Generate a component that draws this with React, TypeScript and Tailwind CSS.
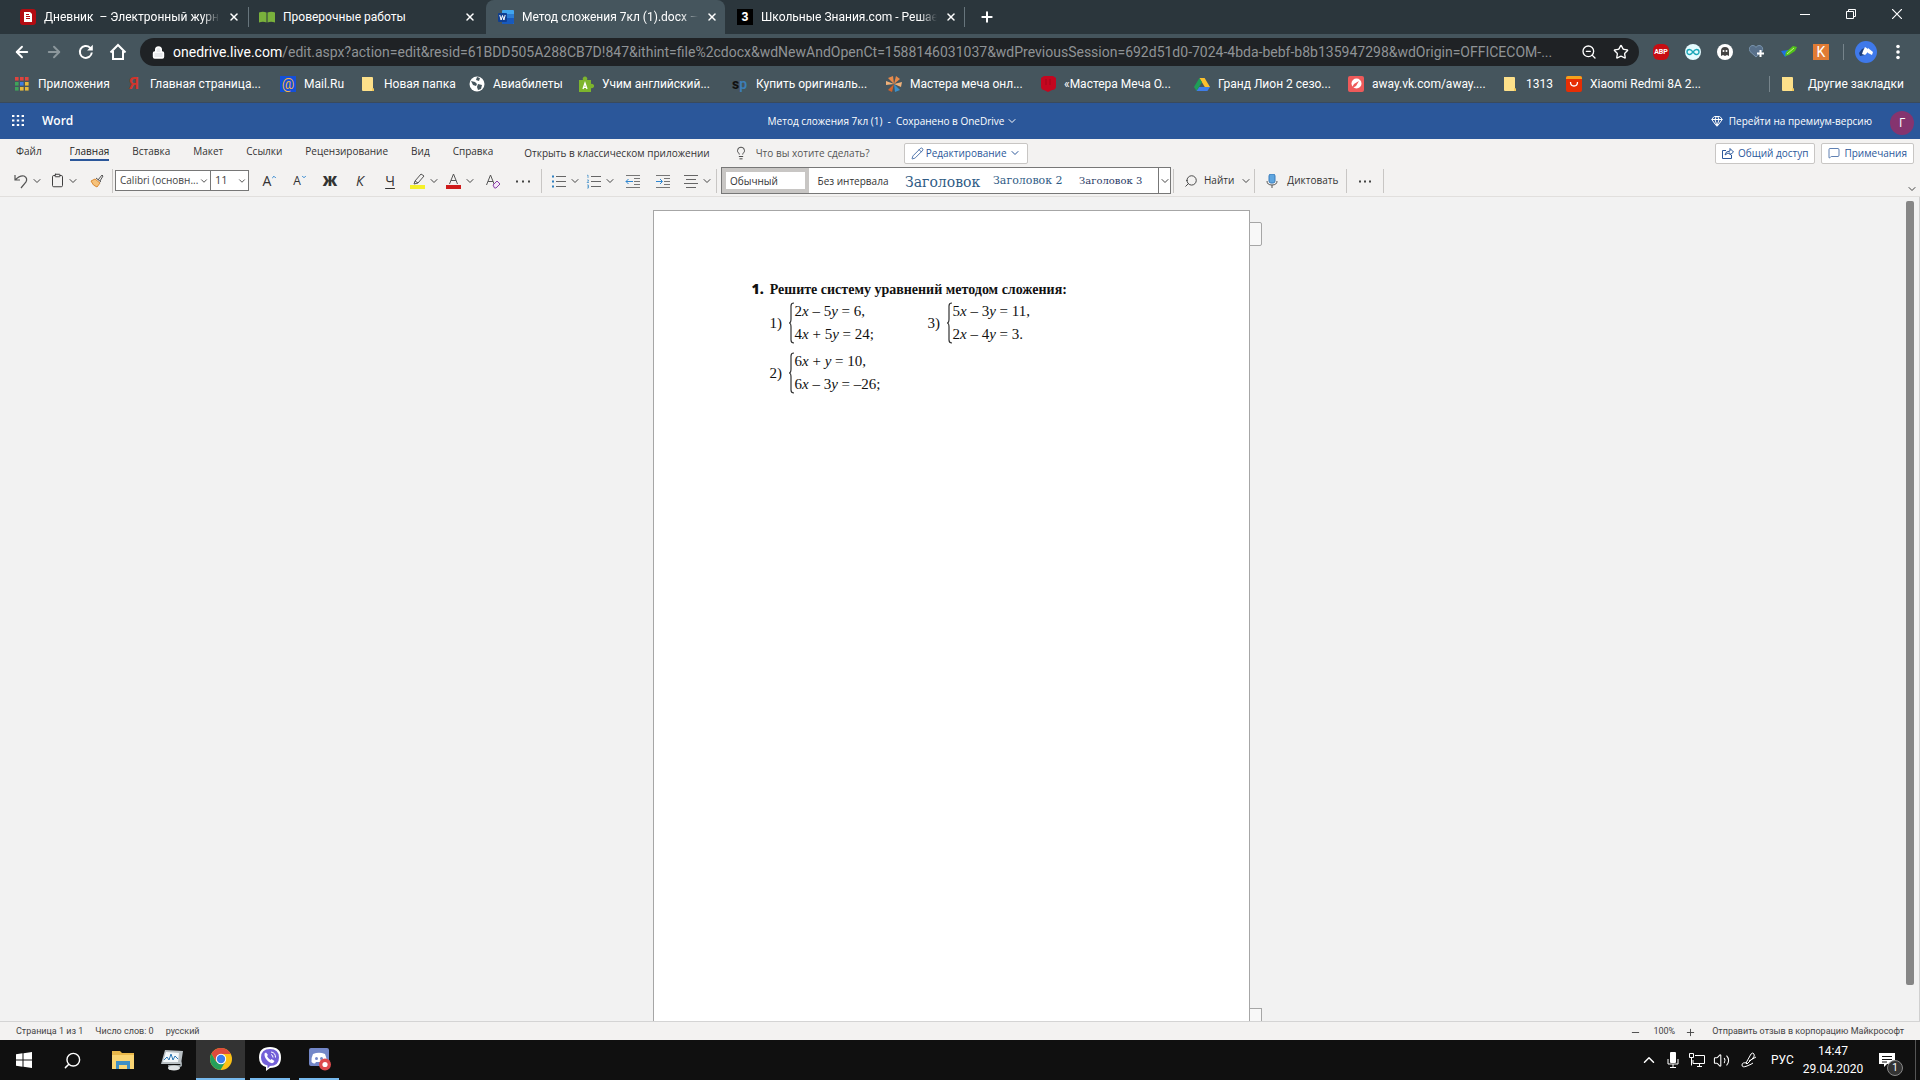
import type { ReactNode } from 'react';
import {
  ArrowLeft,
  ArrowRight,
  ChevronDown,
  ChevronUp,
  Clipboard,
  Gem,
  Lightbulb,
  Lock,
  MessageSquare,
  Minus,
  Pencil,
  Plus,
  Search,
  Star,
  Volume2,
  X,
  ZoomOut,
} from 'lucide-react';

/* ---------- small drawings ---------- */

function Svg({ size = 16, children, box = 16 }: { size?: number; box?: number; children: ReactNode }) {
  return (
    <svg width={size} height={size} viewBox={`0 0 ${box} ${box}`} fill="none" className="shrink-0" aria-hidden="true">
      {children}
    </svg>
  );
}

const DiaryIcon = () => (
  <Svg>
    <rect width="16" height="16" rx="3" fill="#b30c12" />
    <path d="M4 3h6l2 2v8H4z" fill="#fff" />
    <path d="M6 5.500h3M6 7.500h4M6 9.500h4" stroke="#b30c12" />
  </Svg>
);

const BookIcon = () => (
  <Svg>
    <path d="M0 3.500q4-1.500 7.500 0v10q-3.500-1.500-7.500 0zM8.500 3.500q4-1.500 7.500 0v10q-4-1.500-7.500 0z" fill="#79b13c" />
  </Svg>
);

const WordIcon = () => (
  <Svg>
    <rect x="4" y="1" width="12" height="14" rx="1" fill="#41a5ee" />
    <path d="M4 5h12v4H4z" fill="#2b7cd3" />
    <path d="M4 9h12v5a1 1 0 0 1-1 1H4z" fill="#185abd" />
    <rect y="4" width="9" height="9" rx="1" fill="#103f91" />
    <path d="M1.800 6l1.300 5 1.400-4.500L5.900 11l1.300-5" stroke="#fff" />
  </Svg>
);

const ZnanijaIcon = () => (
  <span className="flex h-4 w-4 shrink-0 items-center justify-center bg-black text-xs font-extrabold text-white">3</span>
);

const ReloadIcon = () => (
  <Svg size={18} box={18}>
    <path d="M14.800 9.500A6 6 0 1 1 13 4.600l1.500 1.500" stroke="#fff" strokeWidth="2" />
    <path d="M15.800 1.800v5.700h-5.700z" fill="#fff" />
  </Svg>
);

const HomeIcon = () => (
  <Svg size={18} box={18}>
    <path d="M1.500 9.500L9 2l7.500 7.500M4 8v8h10V8" stroke="#fff" strokeWidth="2" />
  </Svg>
);

const AppsIcon = () => (
  <Svg>
    {['#e0443e', '#e0443e', '#e0443e', '#3fa35a', '#3f7de0', '#e6b93c', '#3fa35a', '#e6b93c', '#e6b93c'].map((c, i) => (
      <rect key={i} x={1 + (i % 3) * 5} y={1 + Math.floor(i / 3) * 5} width="3.600" height="3.600" fill={c} />
    ))}
  </Svg>
);

const FolderIcon = () => (
  <Svg>
    <path d="M2 1h10a1 1 0 0 1 1 1v10l1 1v2H3a1 1 0 0 1-1-1z" fill="#fde08a" />
    <path d="M12 12l2 1v2h-2z" fill="#f3c956" />
  </Svg>
);

const MailRuIcon = () => (
  <span className="flex h-4 w-4 shrink-0 items-center justify-center bg-[#1450d8] text-sm leading-none text-[#f2b04a]">@</span>
);

const GlobeIcon = () => (
  <Svg>
    <circle cx="8" cy="8" r="7.500" fill="#fff" />
    <path d="M2 5l4 1 2 2-1 2-3-1zM8 1l3 1-1 3-3-1zM9 8l4 1-1 4-3 1-1-3z" fill="#45555d" />
  </Svg>
);

const PuzzleIcon = () => (
  <Svg>
    <path d="M1 4h4a2.300 2.300 0 1 1 4 0h4v4a2.200 2.200 0 1 1 0 4v4H1z" fill="#7db52d" />
    <path d="M5 13l2-6 2 6M5.700 11.300h2.600" stroke="#fff" strokeWidth="1.300" />
  </Svg>
);

const WheelIcon = () => (
  <Svg>
    <path d="M8 8L7 0 2 2zM8 8l6-5-4-3z" fill="#e78a4b" />
    <path d="M8 8L0 5v4zM8 8l8-2-1 5z" fill="#f0b27a" />
    <path d="M8 8l-6 6 4 2z" fill="#d2632b" />
    <path d="M8 8l1 8 5-2z" fill="#3a8fc9" />
  </Svg>
);

const ShieldIcon = () => (
  <Svg>
    <path d="M1 2l3-2h9l3 2v8q0 4-4 4l-4 2-4-2q-3 0-3-4z" fill="#c4061f" />
    <path d="M6 3v6M10 3v6" stroke="#a0041a" />
  </Svg>
);

const DriveIcon = () => (
  <Svg>
    <path d="M5.400 2h5.200L16 11h-5.200z" fill="#fbc02d" />
    <path d="M5.400 2L0 11l2.600 4L8 6.200z" fill="#1e9e57" />
    <path d="M5.200 11H16l-2.600 4H2.600z" fill="#3f7de8" />
  </Svg>
);

const VkAwayIcon = () => (
  <Svg>
    <rect width="16" height="16" rx="2" fill="#ee5a5a" />
    <circle cx="8.500" cy="7.500" r="5" fill="#fff" />
    <path d="M3 13l3-5 5-3-3 5z" fill="#ee5a5a" />
  </Svg>
);

const AliIcon = () => (
  <Svg>
    <rect width="16" height="16" rx="2" fill="#e62e04" />
    <path d="M0 3V2a2 2 0 0 1 2-2h12a2 2 0 0 1 2 2v1z" fill="#f7a11b" />
    <path d="M4.500 6q0 4 3.500 4t3.500-4" stroke="#fff" strokeWidth="1.300" />
  </Svg>
);

const Caret = ({ className = 'text-[#444]' }: { className?: string }) => (
  <ChevronDown size={12} strokeWidth={2} className={`shrink-0 ${className}`} />
);

function Lines({ kind }: { kind: 'bullets' | 'numbers' | 'outdent' | 'indent' | 'align' }) {
  if (kind === 'align') {
    return (
      <Svg>
        <path d="M1 2.500h14M3 6.500h10M1 10.500h14M3 14.500h10" stroke="#666" />
      </Svg>
    );
  }
  if (kind === 'outdent' || kind === 'indent') {
    return (
      <Svg>
        <path d="M1 2.500h14M9 5.500h6M9 8.500h6M9 11.500h6M1 14.500h14" stroke="#777" />
        <path d={kind === 'outdent' ? 'M8 8.500H1M3.500 6L1 8.500 3.500 11' : 'M1 8.500h6M5 6l2.500 2.500L5 11'} stroke="#2f86d0" />
      </Svg>
    );
  }
  return (
    <Svg>
      <path d="M5 3.500h10M5 8.500h10M5 13.500h10" stroke="#666" />
      {kind === 'bullets' ? (
        <path d="M1 2.500h2v2H1zM1 7.500h2v2H1zM1 12.500h2v2H1z" fill="#2f7fc0" />
      ) : (
        <path d="M1 2.500l1-.5v3M1 7h1.500v1L1 9.500h2M1 12h1.500v3H1M1.500 13.500h1" stroke="#4a94cc" strokeWidth=".8" />
      )}
    </Svg>
  );
}

/* ---------- browser ---------- */

const tabs = [
  { title: 'Дневник  – Электронный журна', icon: <DiaryIcon />, fade: true },
  { title: 'Проверочные работы', icon: <BookIcon /> },
  { title: 'Метод сложения 7кл (1).docx —', icon: <WordIcon />, active: true, fade: true },
  { title: 'Школьные Знания.com - Решае', icon: <ZnanijaIcon />, fade: true },
];

function TabStrip() {
  return (
    <div className="flex h-[34px] items-stretch bg-[#2b363c] pl-2 text-white">
      {tabs.map((t, i) => (
        <div key={t.title} className={`flex w-[239px] items-center gap-2 pl-3 pr-2 ${t.active ? 'rounded-t-lg bg-[#45555d]' : ''}`}>
          {t.icon}
          <a
            href="#"
            className={`w-44 whitespace-pre text-xs ${
              t.fade ? '[mask-image:linear-gradient(to_right,black_90%,transparent)]' : ''
            }`}
          >
            {t.title}
          </a>
          <button aria-label="Закрыть вкладку" className="flex w-4 justify-center">
            <X size={12} strokeWidth={3} />
          </button>
          {i === 0 && <span className="-mr-2 h-5 w-px shrink-0 bg-[#67757c]" />}
        </div>
      ))}
      <span className="my-auto h-5 w-px bg-[#67757c]" />
      <button aria-label="Новая вкладка" className="px-3.5">
        <Plus size={16} strokeWidth={3} />
      </button>
      <div className="ml-auto flex h-7 items-center">
        <button aria-label="Свернуть" className="flex w-[46px] justify-center">
          <Svg size={10} box={10}>
            <path d="M0 5.500h10" stroke="#fff" />
          </Svg>
        </button>
        <button aria-label="Свернуть в окно" className="flex w-[46px] justify-center">
          <Svg size={10} box={10}>
            <path d="M.5 2.500h7v7h-7zM2.500 2.500v-2h7v7h-2" stroke="#fff" />
          </Svg>
        </button>
        <button aria-label="Закрыть" className="flex w-[46px] justify-center">
          <Svg size={10} box={10}>
            <path d="M0 0l10 10M10 0L0 10" stroke="#fff" strokeWidth="1.200" />
          </Svg>
        </button>
      </div>
    </div>
  );
}

const extensions = [
  {
    name: 'Adblock Plus',
    icon: (
      <span className="flex h-4 w-4 items-center justify-center rounded-md bg-[#c70d12] text-[7px] font-bold text-white">ABP</span>
    ),
  },
  {
    name: 'Синхронизация',
    icon: (
      <Svg>
        <circle cx="8" cy="8" r="8" fill="#e4fbff" />
        <path d="M8 8q-2-2.500-3.500-2.500a2.500 2.500 0 0 0 0 5Q6 10.500 8 8t3.500-2.500a2.500 2.500 0 0 1 0 5Q10 10.500 8 8z" stroke="#1aa7b8" strokeWidth="1.400" />
      </Svg>
    ),
  },
  {
    name: 'Призрак',
    icon: (
      <Svg>
        <circle cx="8" cy="8" r="8" fill="#fff" />
        <path d="M4 12V7a4 4 0 0 1 8 0v5l-2-1-2 1-2-1z" fill="#444" />
        <circle cx="6.500" cy="7" r="1" fill="#fff" />
        <circle cx="9.500" cy="7" r="1" fill="#fff" />
      </Svg>
    ),
  },
  {
    name: 'Избранное',
    icon: (
      <Svg>
        <path d="M7 13L1 7.500Q-1 3 3 1.500q3-.5 4 2 1-2.500 4-2 4 1.500 2 6z" fill="#58708a" stroke="#7893ad" />
        <path d="M11.500 6v7M8 9.500h7" stroke="#fff" strokeWidth="2" />
      </Svg>
    ),
  },
  {
    name: 'Маркер',
    icon: (
      <Svg>
        <path d="M0 7l4 6 4-3-1-4z" fill="#1f6fe0" />
        <path d="M4 12l1-4 7-6 4 1-2 4-6 4z" fill="#52c41a" />
        <path d="M6 10l7-6" stroke="#c8f08a" />
      </Svg>
    ),
  },
  {
    name: 'K',
    icon: <span className="flex h-4 w-4 items-center justify-center bg-[#e07b34] text-sm leading-none text-white">K</span>,
  },
];

function Toolbar() {
  return (
    <div className="flex h-9 items-center bg-[#45555d] pl-1.5 pr-1.5 text-white">
      <button aria-label="Назад" className="flex w-8 justify-center"><ArrowLeft size={18} strokeWidth={2.5} /></button>
      <button aria-label="Вперёд" className="flex w-8 justify-center text-[#8c979c]"><ArrowRight size={18} strokeWidth={2.5} /></button>
      <button aria-label="Обновить" className="flex w-8 justify-center"><ReloadIcon /></button>
      <button aria-label="Домой" className="flex w-8 justify-center"><HomeIcon /></button>
      <div className="ml-1.5 mr-1.5 flex h-7 flex-1 items-center rounded-full bg-[#1f2225] pl-3 pr-2.5 text-sm">
        <Lock size={13} strokeWidth={3} fill="#e8eaed" className="shrink-0" />
        <label htmlFor="address" className="ml-2">onedrive.live.com</label>
        <input
          id="address"
          readOnly
          className="min-w-0 flex-1 bg-transparent text-[#8f9396] outline-none"
          value="/edit.aspx?action=edit&resid=61BDD505A288CB7D!847&ithint=file%2cdocx&wdNewAndOpenCt=1588146031037&wdPreviousSession=692d51d0-7024-4bda-bebf-b8b135947298&wdOrigin=OFFICECOM-..."
        />
        <button aria-label="Масштаб" className="mr-4"><ZoomOut size={16} /></button>
        <button aria-label="В закладки"><Star size={16} /></button>
      </div>
      {extensions.map((e) => (
        <button key={e.name} aria-label={e.name} className="flex w-8 justify-center">
          {e.icon}
        </button>
      ))}
      <span className="mx-1.5 h-4 w-px bg-[#76848b]" />
      <button aria-label="Профиль" className="flex w-8 justify-center">
        <Svg size={22} box={22}>
          <circle cx="11" cy="11" r="11" fill="#3f79ea" />
          <path d="M4 12l3-4 3-1v7l-5 1z" fill="#1d3f7d" />
          <path d="M10 6l3 2v3l-3 3-3-1 1-3zM13 7l5 4-1 3-4-2z" fill="#fff" />
        </Svg>
      </button>
      <button aria-label="Меню" className="flex w-8 justify-center">
        <Svg>
          <circle cx="8" cy="2.500" r="1.800" fill="#fff" />
          <circle cx="8" cy="8" r="1.800" fill="#fff" />
          <circle cx="8" cy="13.500" r="1.800" fill="#fff" />
        </Svg>
      </button>
    </div>
  );
}

const bookmarks = [
  { title: 'Приложения', icon: <AppsIcon />, width: 'w-28' },
  {
    title: 'Главная страница...',
    icon: <span className="w-4 shrink-0 text-center text-base font-bold leading-none text-[#d0352c]">Я</span>,
    width: 'w-[154px]',
  },
  { title: 'Mail.Ru', icon: <MailRuIcon />, width: 'w-20' },
  { title: 'Новая папка', icon: <FolderIcon />, width: 'w-[109px]' },
  { title: 'Авиабилеты', icon: <GlobeIcon />, width: 'w-[109px]' },
  { title: 'Учим английский...', icon: <PuzzleIcon />, width: 'w-[154px]' },
  {
    title: 'Купить оригиналь...',
    icon: (
      <span className="w-4 shrink-0 text-sm font-extrabold leading-none text-[#111]">
        s<span className="font-semibold text-[#3c7fb8]">p</span>
      </span>
    ),
    width: 'w-[154px]',
  },
  { title: 'Мастера меча онл...', icon: <WheelIcon />, width: 'w-[154px]' },
  { title: '«Мастера Меча О...', icon: <ShieldIcon />, width: 'w-[154px]' },
  { title: 'Гранд Лион 2 сезо...', icon: <DriveIcon />, width: 'w-[154px]' },
  { title: 'away.vk.com/away....', icon: <VkAwayIcon />, width: 'w-[154px]' },
  { title: '1313', icon: <FolderIcon />, width: 'w-16' },
  { title: 'Xiaomi Redmi 8A 2...', icon: <AliIcon />, width: 'w-[154px]' },
];

function BookmarkBar() {
  return (
    <nav className="flex h-[33px] items-center border-b border-[#3a4a5c] bg-[#45555d] pb-1 pl-3.5 pr-4 text-xs text-white">
      {bookmarks.map((b) => (
        <a key={b.title} href="#" className={`flex shrink-0 items-center gap-2 whitespace-nowrap ${b.width}`}>
          {b.icon}
          {b.title}
        </a>
      ))}
      <a href="#" className="ml-auto flex items-center gap-3 whitespace-nowrap border-l border-[#76848b] pl-2.5">
        <FolderIcon />
        Другие закладки
      </a>
    </nav>
  );
}

/* ---------- word ---------- */

function WordHeader() {
  return (
    <header className="grid h-9 grid-cols-3 items-center bg-[#2b579a] pl-3 pr-1.5 text-white">
      <div className="flex items-center gap-4.5">
        <button aria-label="Приложения">
          <Svg size={12} box={12}>
            {[0, 1, 2].map((r) => (
              <path key={r} d={`M0 ${1 + r * 4.5}h2.400M4.800 ${1 + r * 4.5}h2.400M9.600 ${1 + r * 4.5}h2.400`} stroke="#fff" strokeWidth="2" />
            ))}
          </Svg>
        </button>
        <span className="text-xs font-semibold">Word</span>
      </div>
      <button className="mr-35 flex items-center justify-center gap-0.5 whitespace-pre">
        Метод сложения 7кл (1)  -  Сохранено в OneDrive
        <Caret className="text-white" />
      </button>
      <div className="flex items-center justify-end">
        <button className="flex items-center gap-1.5">
          <Gem size={12} />
          Перейти на премиум-версию
        </button>
        <button className="ml-4.5 mt-1 h-6 w-6 rounded-full bg-[#85346f] text-xs">Г</button>
      </div>
    </header>
  );
}

const ribbonTabs = ['Файл', 'Главная', 'Вставка', 'Макет', 'Ссылки', 'Рецензирование', 'Вид', 'Справка'];

function RibbonTabs() {
  return (
    <div className="flex h-7 items-center pl-4 pr-1.5 text-[#333]">
      {ribbonTabs.map((t, i) => (
        <button
          key={t}
          className={`${i === 0 ? 'mr-7' : 'mr-[23px]'} mb-0.5 border-b-2 leading-4 ${
            i === 1 ? 'border-[#2b579a] text-[#222]' : 'border-transparent'
          }`}
        >
          {t}
        </button>
      ))}
      <button className="ml-2 mr-6">Открыть в классическом приложении</button>
      <Lightbulb size={14} strokeWidth={1.5} />
      <input
        aria-label="Что вы хотите сделать?"
        placeholder="Что вы хотите сделать?"
        className="ml-2 w-[148px] bg-transparent outline-none placeholder:text-[#555]"
      />
      <button className="flex h-[21px] items-center gap-0.5 rounded-xs border border-[#c8c6c4] bg-white px-1.5 text-[#2b579a]">
        <Pencil size={13} strokeWidth={1.5} />
        Редактирование
        <Caret className="text-[#2b579a]" />
      </button>
      <button className="ml-auto flex h-[21px] items-center gap-1 rounded-xs border border-[#c8c6c4] bg-white px-1.5 text-[#2b579a]">
        <Svg size={12} box={12}>
          <path d="M4 3.500H.5v8h9V8M3 8q.5-4 5-4V1.500L11.500 5 8 8V6Q5 6 3 8z" stroke="#2b579a" />
        </Svg>
        Общий доступ
      </button>
      <button className="ml-1.5 flex h-[21px] items-center gap-1 rounded-xs border border-[#c8c6c4] bg-white px-1.5 text-[#2b579a]">
        <MessageSquare size={12} strokeWidth={1.5} />
        Примечания
      </button>
    </div>
  );
}

const Divider = () => <span className="h-6 w-px shrink-0 bg-[#c8c6c4]" />;

function Tool({ label, className, children }: { label: string; className: string; children: ReactNode }) {
  return (
    <button aria-label={label} className={`flex shrink-0 items-center justify-center gap-0.5 ${className}`}>
      {children}
    </button>
  );
}

function RibbonTools() {
  return (
    <div className="flex h-[30px] items-center border-b border-[#e1dfdd] pb-0.5 pl-2.5 text-[#333]">
      <Tool label="Отменить" className="w-9">
        <Svg>
          <path d="M2 2v5h5M2 7q5-5 9-4 4 2 2 6l-5 6" stroke="#555" strokeWidth="1.200" />
        </Svg>
        <Caret />
      </Tool>
      <Tool label="Вставить" className="w-9"><Clipboard size={15} strokeWidth={1.5} /><Caret /></Tool>
      <Tool label="Формат по образцу" className="w-[30px]">
        <Svg size={14} box={14}>
          <path d="M1 7l4-2 5 4-3 4q-4-1-6-6z" fill="#f6c27a" stroke="#d98a35" />
          <path d="M6 4l5 4M8 6l4-5 1 1-3 5" stroke="#555" />
        </Svg>
      </Tool>
      <Divider />
      <div className="ml-0.5 flex items-center">
        <div className="grid w-24 items-center">
          <select aria-label="Шрифт" className="col-start-1 row-start-1 h-[21px] w-full appearance-none border border-[#777] bg-white pl-1 text-[#444]">
            <option>Calibri (основн...</option>
          </select>
          <ChevronDown size={10} className="pointer-events-none col-start-1 row-start-1 mr-0.5 justify-self-end" />
        </div>
        <div className="-ml-px grid w-[39px] items-center">
          <select aria-label="Размер шрифта" className="col-start-1 row-start-1 h-[21px] w-full appearance-none border border-[#777] bg-white pl-1 text-[11px] text-[#444]">
            <option>11</option>
          </select>
          <ChevronDown size={10} className="pointer-events-none col-start-1 row-start-1 mr-0.5 justify-self-end" />
        </div>
      </div>
      <Tool label="Увеличить шрифт" className="ml-1.5 w-[30px] text-sm">
        A<ChevronUp size={6} strokeWidth={4} className="-ml-0.5 mb-2 text-[#2f86d0]" />
      </Tool>
      <Tool label="Уменьшить шрифт" className="w-[30px] text-xs">
        A<ChevronDown size={6} strokeWidth={4} className="-ml-0.5 mb-2 text-[#2f86d0]" />
      </Tool>
      <Tool label="Полужирный" className="w-[30px] text-sm font-extrabold">Ж</Tool>
      <Tool label="Курсив" className="w-[30px] text-sm italic">К</Tool>
      <Tool label="Подчёркнутый" className="w-[30px] text-sm underline underline-offset-2">Ч</Tool>
      <Tool label="Цвет выделения" className="ml-0.5 w-9">
        <Svg>
          <path d="M0 12h15v4H0z" fill="#f5f02a" />
          <path d="M4 11l1-3 6-7 3 2-6 7zM5 8l3 2" stroke="#555" />
        </Svg>
        <Caret />
      </Tool>
      <Tool label="Цвет текста" className="w-9">
        <Svg>
          <path d="M0 12h15v4H0z" fill="#cf1b1b" />
          <path d="M3.500 11l4-10 4 10M5 7.500h5" stroke="#555" />
        </Svg>
        <Caret />
      </Tool>
      <Tool label="Очистить формат" className="w-7">
        <Svg>
          <path d="M1.500 12l4-10 4 10M3 8.500h5" stroke="#555" />
          <path d="M8 12l4-4 3 3-4 4H9.500z" fill="#f3e6f7" stroke="#8a3fa8" />
        </Svg>
      </Tool>
      <Tool label="Ещё" className="mr-0.5 w-8">
        <Svg><path d="M1 8.500h2M7 8.500h2M13 8.500h2" stroke="#444" strokeWidth="2" /></Svg>
      </Tool>
      <Divider />
      <Tool label="Маркеры" className="ml-1.5 w-9"><Lines kind="bullets" /><Caret /></Tool>
      <Tool label="Нумерация" className="w-[34px]"><Lines kind="numbers" /><Caret /></Tool>
      <Tool label="Уменьшить отступ" className="w-[30px]"><Lines kind="outdent" /></Tool>
      <Tool label="Увеличить отступ" className="w-[30px]"><Lines kind="indent" /></Tool>
      <Tool label="Выравнивание" className="ml-0.5 w-9"><Lines kind="align" /><Caret /></Tool>
      <Divider />
      <div className="ml-1 flex h-[27px] w-[450px] shrink-0 items-stretch border border-[#777] bg-white">
        <button className="w-[87px] border-4 border-[#c8c6c4] pl-1 pt-0.5 text-left">Обычный</button>
        <button className="w-[88px] pt-0.5 text-center">Без интервала</button>
        <button className="ml-2 w-[76px] whitespace-nowrap pt-0.5 text-left font-['DejaVu_Serif',serif] text-sm text-[#2f5b85]">Заголовок</button>
        <button className="ml-3 w-[74px] whitespace-nowrap pt-0.5 text-left font-['DejaVu_Serif',serif] text-[11px] text-[#2f5b85]">Заголовок 2</button>
        <button className="ml-3 w-[74px] whitespace-nowrap text-left font-['DejaVu_Serif',serif] text-[10px] text-[#1f3763]">Заголовок 3</button>
        <button aria-label="Все стили" className="ml-auto flex w-3 items-center justify-center border-l border-[#777]"><Caret /></button>
      </div>
      <span className="w-0.5" />
      <Divider />
      <button className="flex shrink-0 items-center gap-1.5 pl-2.5 pr-0.5">
        <Search size={14} strokeWidth={1.5} className="-scale-x-100" />
        <span>Найти</span>
        <Caret />
      </button>
      <Divider />
      <button className="flex shrink-0 items-center gap-2 pl-2.5 pr-2">
        <Svg size={14} box={14}>
          <rect x="4" width="6" height="9" rx="2" fill="#5fa6e0" stroke="#3a7dbb" />
          <path d="M2 7q0 4 5 4t5-4M7 11v3" stroke="#555" />
        </Svg>
        Диктовать
      </button>
      <Divider />
      <Tool label="Другие команды" className="w-9">
        <Svg><path d="M2 8.500h2M7 8.500h2M12 8.500h2" stroke="#444" strokeWidth="2" /></Svg>
      </Tool>
      <Divider />
      <button aria-label="Свернуть ленту" className="ml-auto mr-0.5 mt-4"><Caret /></button>
    </div>
  );
}

function Equations({ n, lines }: { n: number; lines: string[] }) {
  return (
    <div className="flex items-center">
      <span className="w-[18px]">{n})</span>
      <svg width="6" height="42" viewBox="0 0 6 42" fill="none" aria-hidden="true">
        <path d="M6 1Q3 1 3 4v13q0 4-2 4 2 0 2 4v13q0 3 3 3" stroke="#333" strokeWidth="1.200" />
      </svg>
      <div className="pl-px leading-[23px]">
        {lines.map((line) => (
          <p key={line} className="whitespace-nowrap">
            {line.split(/([xy])/).map((part, i) => (i % 2 ? <i key={i}>{part}</i> : part))}
          </p>
        ))}
      </div>
    </div>
  );
}

function Document() {
  return (
    <main className="flex min-h-0 flex-1 overflow-hidden bg-[#f2f2f2]">
      <div className="flex flex-1 justify-center pt-[13px]">
        <article className="relative w-[597px] border border-b-0 border-[#a6a6a6] bg-white pl-[98px] pt-[68px] font-['Liberation_Serif',serif] text-[15px] text-[#111]">
          <h1 className="text-sm font-bold leading-5">
            <span className="mr-1.5 font-['Open_Sans',sans-serif] font-extrabold">1.</span>
            Решите систему уравнений методом сложения:
          </h1>
          <div className="grid w-80 grid-cols-[158px_1fr] gap-y-1 pl-[18px]">
            <Equations n={1} lines={['2x – 5y = 6,', '4x + 5y = 24;']} />
            <Equations n={3} lines={['5x – 3y = 11,', '2x – 4y = 3.']} />
            <Equations n={2} lines={['6x + y = 10,', '6x – 3y = –26;']} />
          </div>
          <span className="absolute -right-[13px] top-[11px] h-6 w-[13px] rounded-r-xs border border-[#a6a6a6] bg-[#f8f8f8]" />
          <span className="absolute -right-[13px] bottom-0 h-[13px] w-[13px] border border-b-0 border-[#a6a6a6] bg-[#f8f8f8]" />
        </article>
      </div>
      <div className="w-[18px] border-r border-[#d0d0d0] pb-9 pl-1 pt-1">
        <div className="h-full w-2 rounded-xs bg-[#868686]" />
      </div>
    </main>
  );
}

function StatusBar() {
  return (
    <footer className="flex h-[19px] items-center border-t border-[#d4d4d4] bg-[#f3f2f1] px-4 pt-0.5 text-[9px] text-[#444]">
      <span className="mr-3">Страница 1 из 1</span>
      <span className="mr-3">Число слов: 0</span>
      <span>русский</span>
      <button aria-label="Уменьшить" className="ml-auto mr-3"><Minus size={11} /></button>
      <span>100%</span>
      <button aria-label="Увеличить" className="ml-2.5 mr-4"><Plus size={11} /></button>
      <a href="#">Отправить отзыв в корпорацию Майкрософт</a>
    </footer>
  );
}

/* ---------- windows taskbar ---------- */

const pinned = [
  {
    name: 'Проводник',
    icon: (
      <Svg size={22} box={22}>
        <path d="M0 2h8l2 2h12v16H0z" fill="#e9b84a" />
        <path d="M0 6h22v14H0z" fill="#fad573" />
        <path d="M4 12h14v8h-3v-4H7v4H4z" fill="#3f8fc4" />
      </Svg>
    ),
  },
  {
    name: 'Монитор ресурсов',
    icon: (
      <Svg size={24} box={24}>
        <path d="M5 2l18 1-2 13H1z" fill="#b9c0c4" />
        <path d="M6 4l13 1-1 9H3z" fill="#f4f8fa" />
        <path d="M4 12l3-3 2 3 2-6 2 6 2-4 3 3" stroke="#2d78b5" />
        <path d="M8 17h12l2-4v5l-6 4H9z" fill="#9aa2a6" />
        <ellipse cx="14" cy="20" rx="6" ry="2.500" fill="#dfe3e5" />
      </Svg>
    ),
  },
  {
    name: 'Chrome',
    state: 'current',
    icon: (
      <Svg size={22} box={22}>
        <circle cx="11" cy="11" r="11" fill="#fbc116" />
        <path d="M1.500 5.500A11 11 0 0 0 10.500 22L15.500 13.500 6.200 13.700z" fill="#25a05a" />
        <path d="M1.500 5.500L6.500 14 11 6h9.800l-.3-.5A11 11 0 0 0 1.500 5.500z" fill="#de4b3c" />
        <circle cx="11" cy="11" r="5.200" fill="#fff" />
        <circle cx="11" cy="11" r="4.200" fill="#3b7ded" />
      </Svg>
    ),
  },
  {
    name: 'Viber',
    state: 'open',
    icon: (
      <Svg size={24} box={24}>
        <path d="M12 0q11 0 11 10.500T12 21l-4 3v-4Q1 18 1 10.500 1 0 12 0z" fill="#fff" />
        <path d="M12 2q9 0 9 8.500T12 19l-2.500 2.500V18.500Q3 17 3 10.500 3 2 12 2z" fill="#7360d8" />
        <path d="M8 5.500l-1.500 1Q6 11 11 15q3 2 4.500.5l1-1.500-3-2-1 1Q10 11.500 9 9l1-1z" fill="#fff" />
        <path d="M13 5q4.500.5 4.500 5.500M13 7.500q2 .5 2 3" stroke="#fff" />
      </Svg>
    ),
  },
  {
    name: 'Discord',
    state: 'open',
    icon: (
      <Svg size={24} box={24}>
        <path d="M2 3a2 2 0 0 1 2-2h16a2 2 0 0 1 2 2v19l-4-3H4a2 2 0 0 1-2-2z" fill="#7387c8" />
        <path d="M6 7q6-2.500 12 0 2 4 1.500 8-2 1.500-3.500 1.500l-1-1.500H9l-1 1.500q-2 0-3.500-1.500Q4 11 6 7z" fill="#fff" />
        <circle cx="9.500" cy="11.500" r="1.500" fill="#7387c8" />
        <circle cx="14.500" cy="11.500" r="1.500" fill="#7387c8" />
        <circle cx="18" cy="17.500" r="6" fill="#dd4a4c" />
        <circle cx="18" cy="17.500" r="2.600" fill="#fff" />
      </Svg>
    ),
  },
];

function Taskbar() {
  return (
    <div className="flex h-10 items-stretch bg-[#101010] text-xs text-white">
      <button aria-label="Пуск" className="flex w-12 items-center justify-center">
        <Svg>
          <path d="M0 2.200L6.500 1.300v6.200H0zM7.500 1.200L16 0v7.500H7.500zM0 8.500h6.500v6.200L0 13.800zM7.500 8.500H16V16l-8.500-1.200z" fill="#fff" />
        </Svg>
      </button>
      <button aria-label="Поиск" className="mr-0.5 flex w-12 items-center justify-center">
        <Search size={19} strokeWidth={1.8} className="-scale-x-100" />
      </button>
      {pinned.map((p) => (
        <button
          key={p.name}
          aria-label={p.name}
          className={`flex w-[49px] flex-col items-center ${p.state === 'current' ? 'bg-[#333]' : ''}`}
        >
          <span className="flex flex-1 items-center">{p.icon}</span>
          {p.state && <span className={`h-0.5 bg-[#76b9ed] ${p.state === 'current' ? 'w-full' : 'w-10'}`} />}
        </button>
      ))}
      <div className="ml-auto flex items-center">
        <button aria-label="Скрытые значки" className="flex w-6 justify-center"><ChevronUp size={18} /></button>
        <button aria-label="Микрофон" className="flex w-6 justify-center">
          <Svg>
            <rect x="5" width="6" height="11" rx="1" fill="#fff" />
            <path d="M3 7v5h10V7M8 12v3M5 15.500h6" stroke="#fff" />
          </Svg>
        </button>
        <button aria-label="Сеть" className="flex w-6 justify-center">
          <Svg>
            <path d="M6 3.500h9.500v8H4V8M8 14.500h5M10.500 11.500v3M.5 1.500h4v4h-4zM2.500 5.500v8" stroke="#fff" />
          </Svg>
        </button>
        <button aria-label="Громкость" className="flex w-6 justify-center"><Volume2 size={17} strokeWidth={1.5} /></button>
        <button aria-label="Рукописный ввод" className="ml-1 flex w-6 justify-center">
          <Svg>
            <path d="M5 11l5-9q2-2 3 0t-1 4l-6 6zM8 9l7-4M6 11q-5-1-5 2t5 1 6-3" stroke="#fff" />
          </Svg>
        </button>
        <span className="ml-2.5 w-6">РУС</span>
        <div className="ml-1.5 mr-1.5 w-16 text-center leading-[18px]">
          <p>14:47</p>
          <p>29.04.2020</p>
        </div>
        <button aria-label="Уведомления" className="relative ml-2 mr-5 w-4">
          <Svg>
            <path d="M0 1h16v11H8l-3 3v-3H0z" fill="#fff" />
            <path d="M3 4.500h10M3 7.500h10M3 10h5" stroke="#101010" />
          </Svg>
          <span className="absolute -bottom-2 left-2 flex h-4 w-4 items-center justify-center rounded-full border border-[#888] bg-[#333] text-[10px]">1</span>
        </button>
        <span className="mr-1 h-10 w-px bg-[#555]" />
      </div>
    </div>
  );
}

export default function App() {
  return (
    <div className="flex h-screen flex-col overflow-hidden font-['Roboto','Open_Sans',sans-serif]">
      <TabStrip />
      <Toolbar />
      <BookmarkBar />
      <div className="bg-[#f3f2f1] font-['Open_Sans','Noto_Sans',sans-serif] text-[10px]">
        <WordHeader />
        <RibbonTabs />
        <RibbonTools />
      </div>
      <Document />
      <StatusBar />
      <Taskbar />
    </div>
  );
}
